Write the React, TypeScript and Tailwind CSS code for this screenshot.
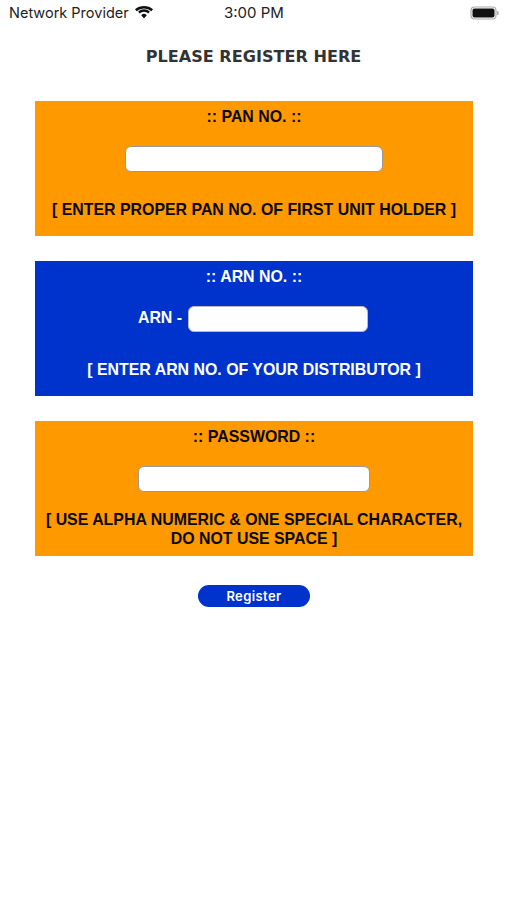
export default function App() {
  return (
    <div className="w-[507px] h-[900px] bg-white font-['Liberation_Sans',sans-serif] flex flex-col">
      <div className="h-[28px] px-[9px] flex items-center justify-between relative text-[#222] font-['Inter',sans-serif]">
        <div className="flex items-center gap-[5px] -mt-[2px]">
          <span className="text-[14.5px]">Network Provider</span>
          <svg width="20" height="15" viewBox="0 0 20 14" className="-mt-[2px]"><path d="M10 13 7.2 9.7a4 4 0 0 1 5.6 0ZM5.7 7.9a6.6 6.6 0 0 1 8.6 0l1.6-1.9a9.2 9.2 0 0 0-11.8 0ZM1 3.8l1.6 1.9a11.4 11.4 0 0 1 14.8 0L19 3.8a14 14 0 0 0-18 0Z" fill="#111"/></svg>
        </div>
        <span className="absolute left-[224px] -mt-[2px] text-[15px]">3:00 PM</span>
        <svg width="30" height="14" viewBox="0 0 30 14" className="-mt-[2px] -mr-[2px]"><rect x="1" y="1" width="25" height="12" rx="3.5" fill="none" stroke="#aaa" strokeWidth="1.2"/><rect x="2.5" y="2.5" width="22" height="9" rx="2" fill="#111"/><rect x="27" y="5" width="1.6" height="4" rx=".8" fill="#aaa"/></svg>
      </div>
      <div className="mt-[19px] h-[20px] text-center text-[16.1px] leading-[20px] font-bold text-[#333] font-['DejaVu_Sans',sans-serif]">PLEASE REGISTER HERE</div>
      <div className="mt-[34px] ml-[35px] w-[438px] h-[135px] bg-[#ff9900] flex flex-col items-center font-bold text-[15.9px] text-[#0a0a0a]">
        <div className="mt-[6px] leading-[20px]">:: PAN NO. ::</div>
        <div className="mt-[19px] w-[258px] h-[26px] bg-white border border-[#999] rounded-[6px]" />
        <div className="mt-[28px] leading-[20px]">[ ENTER PROPER PAN NO. OF FIRST UNIT HOLDER ]</div>
      </div>
      <div className="mt-[25px] ml-[35px] w-[438px] h-[135px] bg-[#0033cc] flex flex-col items-center font-bold text-[15.9px] text-white">
        <div className="mt-[6px] leading-[20px]">:: ARN NO. ::</div>
        <div className="mt-[19px] flex items-center gap-[6px] -ml-[2px]"><span className="-mt-[2px]">ARN -</span><div className="w-[180px] h-[26px] bg-white border border-[#bbb] rounded-[6px]" /></div>
        <div className="mt-[28px] leading-[20px]">[ ENTER ARN NO. OF YOUR DISTRIBUTOR ]</div>
      </div>
      <div className="mt-[25px] ml-[35px] w-[438px] h-[135px] bg-[#ff9900] flex flex-col items-center font-bold text-[15.9px] text-[#0a0a0a]">
        <div className="mt-[6px] leading-[20px]">:: PASSWORD ::</div>
        <div className="mt-[19px] w-[232px] h-[26px] bg-white border border-[#999] rounded-[6px] -ml-[1px]" />
        <div className="mt-[18px] leading-[19px] text-center">[ USE ALPHA NUMERIC &amp; ONE SPECIAL CHARACTER,<br />DO NOT USE SPACE ]</div>
      </div>
      <button className="mt-[29px] ml-[198px] w-[112px] h-[22px] rounded-full bg-[#0033cc] text-white text-[13px] tracking-[0.4px] font-semibold font-['Inter',sans-serif]"><span className="relative top-[0.5px]">Register</span></button>
    </div>
  );
}
